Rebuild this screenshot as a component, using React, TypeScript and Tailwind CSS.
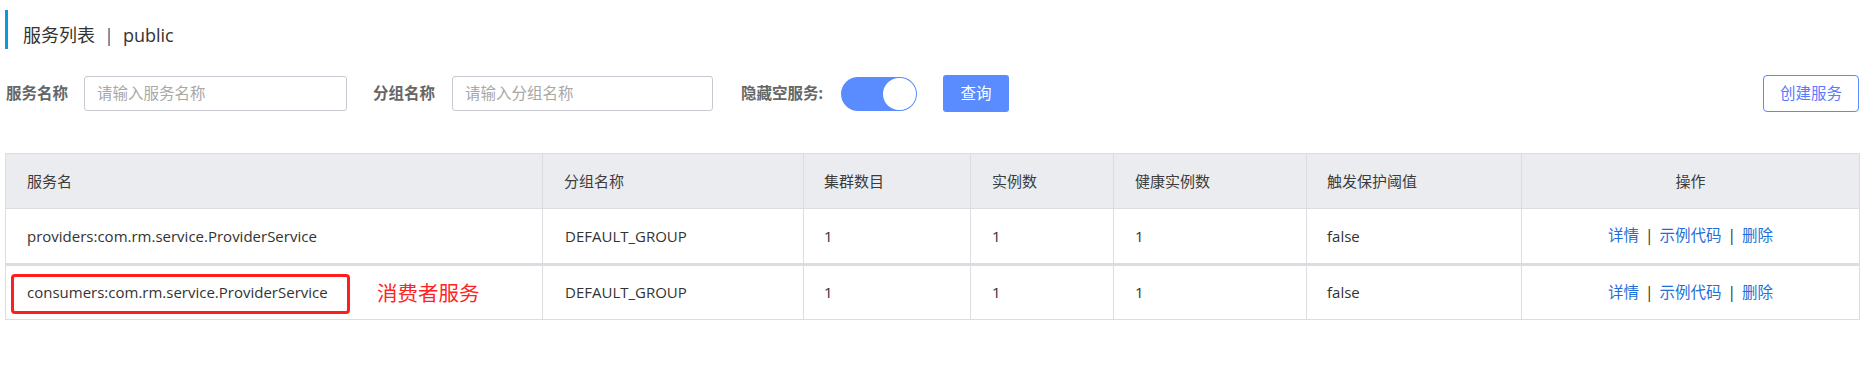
import React from "react";

const rows = [
  { name: "providers:com.rm.service.ProviderService", group: "DEFAULT_GROUP", clusters: "1", instances: "1", healthy: "1", threshold: "false", mark: false },
  { name: "consumers:com.rm.service.ProviderService", group: "DEFAULT_GROUP", clusters: "1", instances: "1", healthy: "1", threshold: "false", mark: true },
];

function Actions() {
  return (
    <div className="flex items-center justify-center text-[15.5px]">
      <span className="text-[#1f6fd8]">详情</span>
      <span className="mx-[6px] text-[#333]">|</span>
      <span className="text-[#1f6fd8]">示例代码</span>
      <span className="mx-[6px] text-[#333]">|</span>
      <span className="text-[#1f6fd8]">删除</span>
    </div>
  );
}

export default function App() {
  return (
    <div className="w-[1868px] h-[376px] bg-white text-[#333] font-['Open_Sans','Noto_Sans_CJK_SC',sans-serif]">
      <div className="pl-[5px] pt-[10px]">
        <div className="h-[39px] border-l-[3px] border-[#0b9ad6] pl-[15px] pt-[13px] text-[18px] leading-[24px] flex">
          <span>服务列表</span>
          <span className="mx-[9px] text-[#1a5f8e]">|</span>
          <span>public</span>
        </div>
      </div>

      <div className="mt-[26px] h-[37px] flex items-center pl-[6px] pr-[9px]">
        <span className="text-[15.5px] font-bold text-[#666]">服务名称</span>
        <div className="ml-[16px] w-[263px] h-[35px] border border-[#c8c9d0] rounded-[3px] flex items-center pl-[12px] text-[15.5px] text-[#a8a8a8]">
          请输入服务名称
        </div>
        <span className="ml-[26px] text-[15.5px] font-bold text-[#666]">分组名称</span>
        <div className="ml-[17px] w-[261px] h-[35px] border border-[#c8c9d0] rounded-[3px] flex items-center pl-[12px] text-[15.5px] text-[#a8a8a8]">
          请输入分组名称
        </div>
        <span className="ml-[28px] text-[15.5px] font-bold text-[#666]">隐藏空服务:</span>
        <div className="ml-[18px] w-[76px] h-[34px] rounded-full bg-[#5a8bff] flex items-center justify-end pr-[1px]">
          <div className="w-[33px] h-[32px] rounded-full bg-white" />
        </div>
        <div className="ml-[26px] w-[66px] h-[37px] rounded-[3px] bg-[#5a8bff] text-white text-[15.5px] flex items-center justify-center">
          查询
        </div>
        <div className="ml-auto w-[96px] h-[37px] rounded-[4px] border border-[#5a8bff] text-[#5a7bff] text-[15.5px] flex items-center justify-center">
          创建服务
        </div>
      </div>

      <div className="mt-[41px] pl-[5px] pr-[9px]">
        <table className="table-fixed border-collapse w-[1854px] text-[15px]">
          <colgroup>
            <col className="w-[537px]" />
            <col className="w-[261px]" />
            <col className="w-[167px]" />
            <col className="w-[143px]" />
            <col className="w-[193px]" />
            <col className="w-[215px]" />
            <col className="w-[338px]" />
          </colgroup>
          <thead>
            <tr className="bg-[#ebecf0] h-[55px] text-[#3c3c3c]">
              <th className="border border-[#dcdde2] text-left font-normal pl-[21px]">服务名</th>
              <th className="border border-[#dcdde2] text-left font-normal pl-[21px]">分组名称</th>
              <th className="border border-[#dcdde2] text-left font-normal pl-[20px]">集群数目</th>
              <th className="border border-[#dcdde2] text-left font-normal pl-[21px]">实例数</th>
              <th className="border border-[#dcdde2] text-left font-normal pl-[21px]">健康实例数</th>
              <th className="border border-[#dcdde2] text-left font-normal pl-[20px]">触发保护阈值</th>
              <th className="border border-[#dcdde2] text-center font-normal">操作</th>
            </tr>
          </thead>
          <tbody>
            {rows.map((r, i) => (
              <tr key={i} className={i === 0 ? "h-[56px] border-b-[3px] border-[#dcdde2]" : "h-[55px]"}>
                <td className="border border-[#dcdde2] pl-[21px] relative">
                  {r.mark && (
                    <>
                      <div className="absolute left-[5px] top-[8px] w-[339px] h-[40px] border-[3px] border-[#ff1d1d] rounded-[4px]" />
                      <span className="absolute left-[371px] top-[13px] text-[20.5px] leading-[28px] text-[#ff2424]">消费者服务</span>
                    </>
                  )}
                  <span className="relative">{r.name}</span>
                </td>
                <td className="border border-[#dcdde2] pl-[22px]">{r.group}</td>
                <td className="border border-[#dcdde2] pl-[20px]">{r.clusters}</td>
                <td className="border border-[#dcdde2] pl-[21px]">{r.instances}</td>
                <td className="border border-[#dcdde2] pl-[21px]">{r.healthy}</td>
                <td className="border border-[#dcdde2] pl-[20px]">{r.threshold}</td>
                <td className="border border-[#dcdde2]"><Actions /></td>
              </tr>
            ))}
          </tbody>
        </table>
      </div>
    </div>
  );
}
